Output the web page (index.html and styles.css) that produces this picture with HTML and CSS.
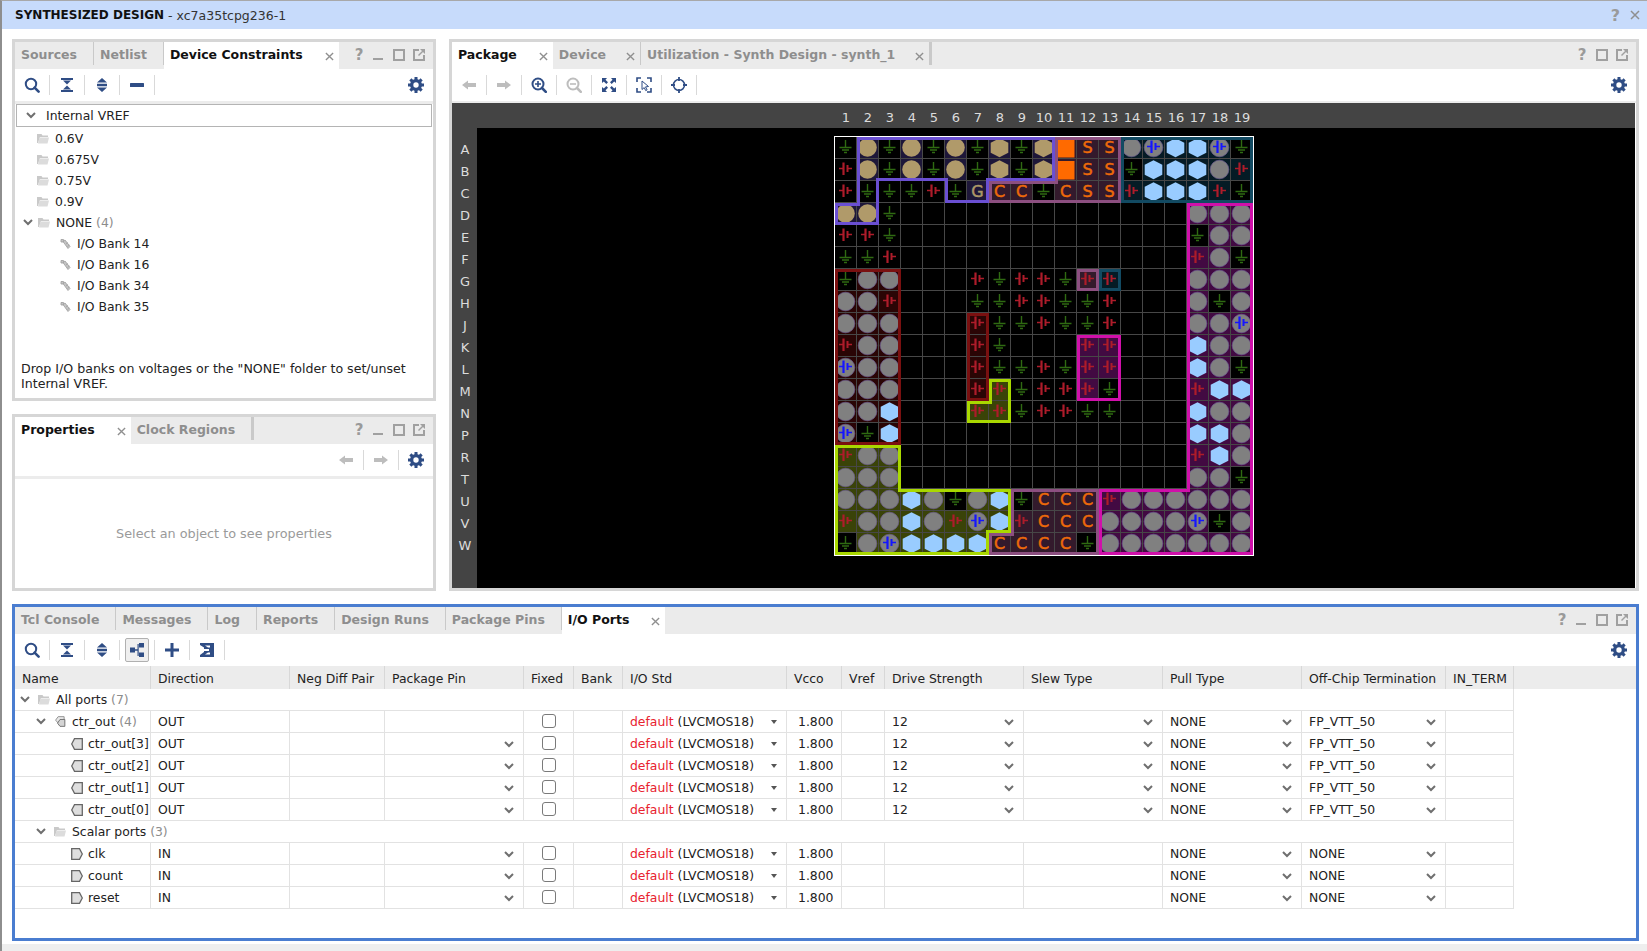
FILE: index.html
```html
<!DOCTYPE html>
<html lang="en">
<head>
<meta charset="utf-8">
<title>Synthesized Design</title>
<link rel="stylesheet" href="styles.css">
</head>
<body>
<svg class="sprites" width="0" height="0" aria-hidden="true">
  <symbol id="i-search" viewBox="0 0 16 16"><circle cx="7" cy="7" r="5.2" fill="none" stroke="currentColor" stroke-width="2"/><path d="M10.6 10.6l4 4" stroke="currentColor" stroke-width="2.6" stroke-linecap="round"/></symbol>
  <symbol id="i-collapse" viewBox="0 0 16 16"><path d="M2 1h12v2H2zM4 3.500h8l-4 4zM8 8.500l4 4H4zM2 13h12v2H2z" fill="currentColor"/></symbol>
  <symbol id="i-expand" viewBox="0 0 16 16"><path d="M8 1l5 4.500H3zM3 6.800h10v2.400H3zM3 10.500h10l-5 4.500z" fill="currentColor"/></symbol>
  <symbol id="i-minus" viewBox="0 0 16 16"><rect x="1" y="6" width="14" height="4" rx=".5" fill="currentColor"/></symbol>
  <symbol id="i-gear" viewBox="0 0 16 16"><g fill="currentColor"><path d="M6.500 0h3v16h-3zM0 6.500h16v3H0z"/><path d="M6.500 0h3v16h-3zM0 6.500h16v3H0z" transform="rotate(45 8 8)"/><circle cx="8" cy="8" r="6"/></g><circle cx="8" cy="8" r="2.700" fill="#fff"/></symbol>
  <symbol id="i-back" viewBox="0 0 16 16"><path d="M1 8l6-4.500V6h8v4H7v2.500z" fill="currentColor"/></symbol>
  <symbol id="i-fwd" viewBox="0 0 16 16"><path d="M15 8L9 3.500V6H1v4h8v2.500z" fill="currentColor"/></symbol>
  <symbol id="i-zoomin" viewBox="0 0 16 16"><circle cx="7" cy="7" r="5.500" fill="none" stroke="currentColor" stroke-width="2"/><path d="M4 7h6M7 4v6" stroke="currentColor" stroke-width="1.600"/><path d="M11 11l3.800 3.800" stroke="currentColor" stroke-width="2.600" stroke-linecap="round"/></symbol>
  <symbol id="i-zoomout" viewBox="0 0 16 16"><circle cx="7" cy="7" r="5.500" fill="none" stroke="currentColor" stroke-width="2"/><path d="M4 7h6" stroke="currentColor" stroke-width="1.600"/><path d="M11 11l3.800 3.800" stroke="currentColor" stroke-width="2.600" stroke-linecap="round"/></symbol>
  <symbol id="i-fit" viewBox="0 0 16 16"><g fill="currentColor"><path d="M1 1h5L4.500 2.800 7 5.300 5.300 7 2.800 4.500 1 6z"/><path d="M15 1v5l-1.800-1.500L10.700 7 9 5.300l2.500-2.500L10 1z"/><path d="M1 15v-5l1.800 1.500L5.300 9 7 10.700l-2.500 2.500L6 15z"/><path d="M15 15h-5l1.500-1.800L9 10.700 10.700 9l2.500 2.500L15 10z"/></g></symbol>
  <symbol id="i-select" viewBox="0 0 16 16"><path d="M1 5V1h4M11 1h4v4M15 11v4h-4M5 15H1v-4" fill="none" stroke="currentColor" stroke-width="1.600"/><path d="M6 4l6.500 5.500-3 .4 1.600 3-1.400.7-1.500-3-2.200 1.900z" fill="#fff" stroke="currentColor"/></symbol>
  <symbol id="i-cross" viewBox="0 0 16 16"><circle cx="8" cy="8" r="5.500" fill="none" stroke="currentColor" stroke-width="1.500"/><path d="M8 0v4M8 12v4M0 8h4M12 8h4" stroke="currentColor" stroke-width="1.800"/></symbol>
  <symbol id="i-group" viewBox="0 0 16 16"><path d="M1 5.500h5v5H1zM6 7.300h3v1.400H6zM8.500 2h1.200v12H8.500zM10 1h5v4.500h-5zM10 10.500h5V15h-5z" fill="currentColor"/></symbol>
  <symbol id="i-plus" viewBox="0 0 16 16"><path d="M6.500 1h3v5.500H15v3H9.500V15h-3V9.500H1v-3h5.500z" fill="currentColor"/></symbol>
  <symbol id="i-assign" viewBox="0 0 16 16"><path d="M1 1h14v14H1v-2l4-3V9h5V7H5V5.500L1 3zM6 3.500l3 2h2V3.500zM6 12.500h5v-2H9z" fill="currentColor" fill-rule="evenodd"/></symbol>
  <symbol id="i-min" viewBox="0 0 14 14"><rect x="1" y="10" width="10" height="2" fill="currentColor"/></symbol>
  <symbol id="i-max" viewBox="0 0 14 14"><rect x="2" y="2" width="10" height="10" fill="none" stroke="currentColor" stroke-width="2"/></symbol>
  <symbol id="i-pop" viewBox="0 0 14 14"><path d="M7 2H2v10h10V7" fill="none" stroke="currentColor" stroke-width="2"/><path d="M8 1h5v5z M6 7l4-4 1 1-4 4z" fill="currentColor"/></symbol>
  <symbol id="i-close" viewBox="0 0 10 10"><path d="M1 1l8 8M9 1l-8 8" stroke="currentColor" stroke-width="1.500"/></symbol>
  <symbol id="i-chev" viewBox="0 0 10 7"><path d="M1 1l4 4 4-4" fill="none" stroke="currentColor" stroke-width="2"/></symbol>
  <symbol id="i-folder" viewBox="0 0 12 11"><path d="M0 1h4.500l1 1.500H11V4H3L1 10H0z" fill="#c9c9c9"/><path d="M2.500 4.500H12L10.500 10.500H1z" fill="#dcdcdc"/></symbol>
  <symbol id="i-bank" viewBox="0 0 12 12"><path d="M2 1.500h2.500v2.500H2zM4 3.500l2-1.500 5 6.500-2 2zM7 6l2-1.500M8.500 8.500l2-1.500" fill="#c4c4c4" stroke="#a4a4a4" stroke-width=".9"/></symbol>
  <symbol id="i-out" viewBox="0 0 12 12"><path d="M3.500 .7h7.800v10.600H3.500L.7 6z" fill="#dedede" stroke="#666" stroke-width="1.300"/></symbol>
  <symbol id="i-in" viewBox="0 0 12 12"><path d="M.7 .7h7.800l2.800 5.300-2.800 5.300H.7z" fill="#dedede" stroke="#666" stroke-width="1.300"/></symbol>
  <symbol id="i-bus" viewBox="0 0 12 12"><path d="M4 .7h6.500v7H4L1.200 4.500z" fill="#e8e8e8" stroke="#8c8c8c"/><path d="M6 3.800h5.300v7.500H6L3.300 7.800z" fill="#d4d4d4" stroke="#6c6c6c"/></symbol>
</svg>

<div class="app">
  <header class="titlebar">
    <span class="title-main">SYNTHESIZED DESIGN</span><span class="title-sub">&nbsp;- xc7a35tcpg236-1</span>
    <div class="title-actions">
      <span class="help help-large">?</span>
      <svg class="title-close"><use href="#i-close"/></svg>
    </div>
  </header>

  <main class="workspace">
    <div class="upper">
      <div class="left-col">
        <section class="panel panel-sources">
          <div class="tabbar">
            <div class="tab">Sources</div>
            <div class="tab">Netlist</div>
            <div class="tab active"><span>Device Constraints</span><svg class="tab-close"><use href="#i-close"/></svg></div>
            <div class="win-icons">
              <span class="win-icon help">?</span>
              <svg class="win-icon"><use href="#i-min"/></svg>
              <svg class="win-icon"><use href="#i-max"/></svg>
              <svg class="win-icon"><use href="#i-pop"/></svg>
            </div>
          </div>
          <div class="toolbar">
            <div class="tool"><svg><use href="#i-search"/></svg></div><i class="sep"></i>
            <div class="tool"><svg><use href="#i-collapse"/></svg></div><i class="sep"></i>
            <div class="tool"><svg><use href="#i-expand"/></svg></div><i class="sep"></i>
            <div class="tool"><svg><use href="#i-minus"/></svg></div><i class="sep"></i>
            <div class="tool tool-end"><svg><use href="#i-gear"/></svg></div>
          </div>
          <div class="tree">
            <div class="tree-head"><svg class="chev"><use href="#i-chev"/></svg>Internal VREF</div>
            <div class="tree-row lvl1"><svg class="folder"><use href="#i-folder"/></svg>0.6V</div>
            <div class="tree-row lvl1"><svg class="folder"><use href="#i-folder"/></svg>0.675V</div>
            <div class="tree-row lvl1"><svg class="folder"><use href="#i-folder"/></svg>0.75V</div>
            <div class="tree-row lvl1"><svg class="folder"><use href="#i-folder"/></svg>0.9V</div>
            <div class="tree-row lvl0"><svg class="chev"><use href="#i-chev"/></svg><svg class="folder"><use href="#i-folder"/></svg>NONE&nbsp;<span class="count">(4)</span></div>
            <div class="tree-row lvl2"><svg class="bank"><use href="#i-bank"/></svg>I/O Bank 14</div>
            <div class="tree-row lvl2"><svg class="bank"><use href="#i-bank"/></svg>I/O Bank 16</div>
            <div class="tree-row lvl2"><svg class="bank"><use href="#i-bank"/></svg>I/O Bank 34</div>
            <div class="tree-row lvl2"><svg class="bank"><use href="#i-bank"/></svg>I/O Bank 35</div>
          </div>
          <p class="note">Drop I/O banks on voltages or the "NONE" folder to set/unset<br>Internal VREF.</p>
        </section>

        <section class="panel panel-props">
          <div class="tabbar">
            <div class="tab active"><span>Properties</span><svg class="tab-close"><use href="#i-close"/></svg></div>
            <div class="tab tab-heavy">Clock Regions</div>
            <div class="win-icons">
              <span class="win-icon help">?</span>
              <svg class="win-icon"><use href="#i-min"/></svg>
              <svg class="win-icon"><use href="#i-max"/></svg>
              <svg class="win-icon"><use href="#i-pop"/></svg>
            </div>
          </div>
          <div class="toolbar">
            <div class="tool disabled tool-push"><svg><use href="#i-back"/></svg></div><i class="sep"></i>
            <div class="tool disabled"><svg><use href="#i-fwd"/></svg></div><i class="sep"></i>
            <div class="tool"><svg><use href="#i-gear"/></svg></div>
          </div>
          <div class="empty">Select an object to see properties</div>
        </section>
      </div>

      <section class="panel panel-package">
        <div class="tabbar">
          <div class="tab active"><span>Package</span><svg class="tab-close"><use href="#i-close"/></svg></div>
          <div class="tab tab-closable"><span>Device</span><svg class="tab-close"><use href="#i-close"/></svg></div>
          <div class="tab tab-closable tab-heavy"><span>Utilization - Synth Design - synth_1</span><svg class="tab-close"><use href="#i-close"/></svg></div>
          <div class="win-icons">
            <span class="win-icon help">?</span>
            <svg class="win-icon"><use href="#i-max"/></svg>
            <svg class="win-icon"><use href="#i-pop"/></svg>
          </div>
        </div>
        <div class="toolbar toolbar-thin">
          <div class="tool disabled"><svg><use href="#i-back"/></svg></div><i class="sep"></i>
          <div class="tool disabled"><svg><use href="#i-fwd"/></svg></div><i class="sep"></i>
          <div class="tool"><svg><use href="#i-zoomin"/></svg></div><i class="sep"></i>
          <div class="tool disabled"><svg><use href="#i-zoomout"/></svg></div><i class="sep"></i>
          <div class="tool"><svg><use href="#i-fit"/></svg></div><i class="sep"></i>
          <div class="tool"><svg><use href="#i-select"/></svg></div><i class="sep"></i>
          <div class="tool"><svg><use href="#i-cross"/></svg></div><i class="sep"></i>
          <div class="tool tool-end"><svg><use href="#i-gear"/></svg></div>
        </div>
        <svg id="package" class="package" width="1183" height="485" viewBox="0 0 1183 485"></svg>
      </section>
    </div>

    <section class="panel panel-ports">
      <div class="tabbar">
        <div class="tab">Tcl Console</div>
        <div class="tab">Messages</div>
        <div class="tab">Log</div>
        <div class="tab">Reports</div>
        <div class="tab">Design Runs</div>
        <div class="tab">Package Pins</div>
        <div class="tab active"><span>I/O Ports</span><svg class="tab-close"><use href="#i-close"/></svg></div>
        <div class="win-icons">
          <span class="win-icon help">?</span>
          <svg class="win-icon"><use href="#i-min"/></svg>
          <svg class="win-icon"><use href="#i-max"/></svg>
          <svg class="win-icon"><use href="#i-pop"/></svg>
        </div>
      </div>
      <div class="toolbar toolbar-flush">
        <div class="tool"><svg><use href="#i-search"/></svg></div><i class="sep"></i>
        <div class="tool"><svg><use href="#i-collapse"/></svg></div><i class="sep"></i>
        <div class="tool"><svg><use href="#i-expand"/></svg></div><i class="sep"></i>
        <div class="tool"><span class="toggled"><svg><use href="#i-group"/></svg></span></div><i class="sep"></i>
        <div class="tool"><svg><use href="#i-plus"/></svg></div><i class="sep"></i>
        <div class="tool"><svg><use href="#i-assign"/></svg></div><i class="sep"></i>
        <div class="tool tool-end"><svg><use href="#i-gear"/></svg></div>
      </div>
      <div class="table-wrap">
        <table class="ports">
          <colgroup>
            <col class="c-name"><col class="c-dir"><col class="c-neg"><col class="c-pin"><col class="c-fixed"><col class="c-bank"><col class="c-std"><col class="c-vcco"><col class="c-vref"><col class="c-drive"><col class="c-slew"><col class="c-pull"><col class="c-off"><col class="c-term">
          </colgroup>
          <thead>
            <tr><th>Name</th><th>Direction</th><th>Neg Diff Pair</th><th>Package Pin</th><th>Fixed</th><th>Bank</th><th>I/O Std</th><th>Vcco</th><th>Vref</th><th>Drive Strength</th><th>Slew Type</th><th>Pull Type</th><th>Off-Chip Termination</th><th>IN_TERM</th></tr>
          </thead>
          <tbody>
            <tr><td colspan="14"><div class="name lvl-a"><svg class="chev"><use href="#i-chev"/></svg><svg class="folder"><use href="#i-folder"/></svg>All ports&nbsp;<span class="count">(7)</span></div></td></tr>
            <tr><td><div class="name lvl-b"><svg class="chev"><use href="#i-chev"/></svg><svg class="folder"><use href="#i-bus"/></svg>ctr_out&nbsp;<span class="count">(4)</span></div></td><td>OUT</td><td></td><td></td><td class="mid"><span class="cb"></span></td><td></td><td><div class="sel"><span><em>default</em> (LVCMOS18)</span><i class="tri"></i></div></td><td class="vcco">1.800</td><td></td><td><div class="sel"><span>12</span><svg class="chev"><use href="#i-chev"/></svg></div></td><td><div class="sel"><svg class="chev"><use href="#i-chev"/></svg></div></td><td><div class="sel"><span>NONE</span><svg class="chev"><use href="#i-chev"/></svg></div></td><td><div class="sel"><span>FP_VTT_50</span><svg class="chev"><use href="#i-chev"/></svg></div></td><td></td></tr>
            <tr><td><div class="name lvl-c"><svg class="port"><use href="#i-out"/></svg>ctr_out[3]</div></td><td>OUT</td><td></td><td><div class="sel"><svg class="chev"><use href="#i-chev"/></svg></div></td><td class="mid"><span class="cb"></span></td><td></td><td><div class="sel"><span><em>default</em> (LVCMOS18)</span><i class="tri"></i></div></td><td class="vcco">1.800</td><td></td><td><div class="sel"><span>12</span><svg class="chev"><use href="#i-chev"/></svg></div></td><td><div class="sel"><svg class="chev"><use href="#i-chev"/></svg></div></td><td><div class="sel"><span>NONE</span><svg class="chev"><use href="#i-chev"/></svg></div></td><td><div class="sel"><span>FP_VTT_50</span><svg class="chev"><use href="#i-chev"/></svg></div></td><td></td></tr>
            <tr><td><div class="name lvl-c"><svg class="port"><use href="#i-out"/></svg>ctr_out[2]</div></td><td>OUT</td><td></td><td><div class="sel"><svg class="chev"><use href="#i-chev"/></svg></div></td><td class="mid"><span class="cb"></span></td><td></td><td><div class="sel"><span><em>default</em> (LVCMOS18)</span><i class="tri"></i></div></td><td class="vcco">1.800</td><td></td><td><div class="sel"><span>12</span><svg class="chev"><use href="#i-chev"/></svg></div></td><td><div class="sel"><svg class="chev"><use href="#i-chev"/></svg></div></td><td><div class="sel"><span>NONE</span><svg class="chev"><use href="#i-chev"/></svg></div></td><td><div class="sel"><span>FP_VTT_50</span><svg class="chev"><use href="#i-chev"/></svg></div></td><td></td></tr>
            <tr><td><div class="name lvl-c"><svg class="port"><use href="#i-out"/></svg>ctr_out[1]</div></td><td>OUT</td><td></td><td><div class="sel"><svg class="chev"><use href="#i-chev"/></svg></div></td><td class="mid"><span class="cb"></span></td><td></td><td><div class="sel"><span><em>default</em> (LVCMOS18)</span><i class="tri"></i></div></td><td class="vcco">1.800</td><td></td><td><div class="sel"><span>12</span><svg class="chev"><use href="#i-chev"/></svg></div></td><td><div class="sel"><svg class="chev"><use href="#i-chev"/></svg></div></td><td><div class="sel"><span>NONE</span><svg class="chev"><use href="#i-chev"/></svg></div></td><td><div class="sel"><span>FP_VTT_50</span><svg class="chev"><use href="#i-chev"/></svg></div></td><td></td></tr>
            <tr><td><div class="name lvl-c"><svg class="port"><use href="#i-out"/></svg>ctr_out[0]</div></td><td>OUT</td><td></td><td><div class="sel"><svg class="chev"><use href="#i-chev"/></svg></div></td><td class="mid"><span class="cb"></span></td><td></td><td><div class="sel"><span><em>default</em> (LVCMOS18)</span><i class="tri"></i></div></td><td class="vcco">1.800</td><td></td><td><div class="sel"><span>12</span><svg class="chev"><use href="#i-chev"/></svg></div></td><td><div class="sel"><svg class="chev"><use href="#i-chev"/></svg></div></td><td><div class="sel"><span>NONE</span><svg class="chev"><use href="#i-chev"/></svg></div></td><td><div class="sel"><span>FP_VTT_50</span><svg class="chev"><use href="#i-chev"/></svg></div></td><td></td></tr>
            <tr><td colspan="14"><div class="name lvl-b"><svg class="chev"><use href="#i-chev"/></svg><svg class="folder"><use href="#i-folder"/></svg>Scalar ports&nbsp;<span class="count">(3)</span></div></td></tr>
            <tr><td><div class="name lvl-c"><svg class="port"><use href="#i-in"/></svg>clk</div></td><td>IN</td><td></td><td><div class="sel"><svg class="chev"><use href="#i-chev"/></svg></div></td><td class="mid"><span class="cb"></span></td><td></td><td><div class="sel"><span><em>default</em> (LVCMOS18)</span><i class="tri"></i></div></td><td class="vcco">1.800</td><td></td><td></td><td></td><td><div class="sel"><span>NONE</span><svg class="chev"><use href="#i-chev"/></svg></div></td><td><div class="sel"><span>NONE</span><svg class="chev"><use href="#i-chev"/></svg></div></td><td></td></tr>
            <tr><td><div class="name lvl-c"><svg class="port"><use href="#i-in"/></svg>count</div></td><td>IN</td><td></td><td><div class="sel"><svg class="chev"><use href="#i-chev"/></svg></div></td><td class="mid"><span class="cb"></span></td><td></td><td><div class="sel"><span><em>default</em> (LVCMOS18)</span><i class="tri"></i></div></td><td class="vcco">1.800</td><td></td><td></td><td></td><td><div class="sel"><span>NONE</span><svg class="chev"><use href="#i-chev"/></svg></div></td><td><div class="sel"><span>NONE</span><svg class="chev"><use href="#i-chev"/></svg></div></td><td></td></tr>
            <tr><td><div class="name lvl-c"><svg class="port"><use href="#i-in"/></svg>reset</div></td><td>IN</td><td></td><td><div class="sel"><svg class="chev"><use href="#i-chev"/></svg></div></td><td class="mid"><span class="cb"></span></td><td></td><td><div class="sel"><span><em>default</em> (LVCMOS18)</span><i class="tri"></i></div></td><td class="vcco">1.800</td><td></td><td></td><td></td><td><div class="sel"><span>NONE</span><svg class="chev"><use href="#i-chev"/></svg></div></td><td><div class="sel"><span>NONE</span><svg class="chev"><use href="#i-chev"/></svg></div></td><td></td></tr>
          </tbody>
        </table>
      </div>
    </section>
  </main>
  <footer class="statusbar"></footer>
</div>
<script src="package.js"></script>
</body>
</html>
```

FILE: styles.css
```css
* { box-sizing: border-box; }
html, body { margin: 0; height: 951px; overflow: hidden; background: #fff; }
body { font: 12.4px "DejaVu Sans", sans-serif; color: #222; }
.sprites { position: absolute; }

.app { height: 951px; display: flex; flex-direction: column; border-left: 2px solid #8e8e8e; border-top: 1px solid #a8a8a8; }

.titlebar { height: 28px; flex: none; display: flex; align-items: center; padding-left: 13px; background: #c7dbfb; font-size: 12.5px; }
.title-main { font-weight: 700; font-size: 12px; color: #111; }
.title-sub { color: #333; }
.title-actions { margin-left: auto; display: flex; align-items: center; gap: 10px; padding-right: 7px; color: #8f8f8f; }
.help { font-weight: 700; color: #9a9a9a; text-align: center; }
.help-large { font-size: 16px; }
.title-close { width: 10px; height: 10px; }

.workspace { flex: 1; display: flex; flex-direction: column; gap: 13px; padding: 10px 8px 3px 10px; min-height: 0; }
.upper { height: 552px; display: flex; gap: 13px; }
.left-col { width: 424px; display: flex; flex-direction: column; gap: 13px; }
.statusbar { height: 7px; flex: none; background: #eeeeee; }

.panel { border: 3px solid #d6d6d6; display: flex; flex-direction: column; background: #fff; min-width: 0; }
.panel-sources { height: 362px; }
.panel-props { height: 177px; }
.panel-package { width: 1190px; }
.panel-ports { height: 337px; border-color: #4a7dd0; }

.tabbar { height: 27px; flex: none; display: flex; align-items: flex-start; background: #ebebeb; }
.tab { height: 23px; line-height: 25px; padding: 0 16px 0 6px; border-right: 1px solid #c9c9c9; font-size: 12.5px; font-weight: 700; color: #8e8e8e; white-space: nowrap; display: flex; align-items: flex-start; }
.tab.active { height: 27px; background: #fff; color: #111; border-right: 0; padding: 0 5px 0 6px; }
.tab-closable { padding: 0 5px 0 6px; }
.tab-heavy { border-right: 3px solid #c9c9c9; }
.tab-close { width: 9px; height: 9px; margin: 10px 0 0 22px; color: #8f8f8f; flex: none; }
.tab-closable .tab-close { margin-left: 20px; }
.win-icons { margin-left: auto; padding: 3px 4px 0 0; display: flex; color: #a0a0a0; }
.win-icon { width: 20px; height: 20px; font-size: 15px; line-height: 20px; padding: 3px; }
span.win-icon { padding: 0; }

.toolbar { height: 35px; flex: none; display: flex; align-items: flex-start; padding-top: 6px; border-bottom: 3px solid #ececec; color: #2f4d85; }
.toolbar-thin { height: 34px; border-bottom-width: 2px; }
.toolbar-flush { height: 32px; border-bottom: 0; }
.tool { width: 34px; height: 20px; display: flex; align-items: center; justify-content: center; flex: none; }
.tool svg { width: 16px; height: 16px; display: block; }
.tool.disabled { color: #bdbdbd; }
.tool-end { margin-left: auto; }
.tool-push { margin-left: auto; }
.toggled { width: 24px; height: 24px; flex: none; display: flex; align-items: center; justify-content: center; background: #efefef; border: 1px solid #b0b0b0; border-radius: 2px; }
.sep { width: 1px; height: 20px; flex: none; background: #d9d9d9; }

.tree { flex: 1; }
.tree-head { height: 23px; margin: 0 1px 1px; border: 1px solid #b4b4b4; display: flex; align-items: center; padding-left: 9px; }
.tree-head .chev { margin-right: 10px; }
.tree-row { height: 21px; display: flex; align-items: center; }
.lvl0 { padding-left: 8px; }
.lvl0 .chev { margin-right: 5px; }
.lvl1 { padding-left: 22px; }
.lvl2 { padding-left: 44px; }
.chev { width: 10px; height: 7px; flex: none; color: #6f6f6f; }
.folder { width: 12px; height: 11px; margin-right: 6px; flex: none; }
.bank { width: 12px; height: 12px; margin-right: 6px; flex: none; }
.count { color: #8c8c8c; }
.note { margin: 0 0 7px; padding-left: 6px; line-height: 15px; font-size: 12.6px; color: #222; }

.empty { flex: 1; display: flex; align-items: center; justify-content: center; font-size: 12.8px; color: #9a9a9a; }

.package { display: block; background: #000; }
.package text { font-family: "DejaVu Sans", sans-serif; }
.pk-label { font-size: 13px; fill: #dcdcdc; text-anchor: middle; }
.pk-letter { font-size: 16px; stroke-width: .5px; text-anchor: middle; }

.table-wrap { flex: 1; background: linear-gradient(#ececec 23px, #fff 23px); }
.ports { table-layout: fixed; width: 1499px; border-collapse: separate; border-spacing: 0; }
.c-name { width: 136px; } .c-dir { width: 139px; } .c-neg { width: 95px; } .c-pin { width: 139px; }
.c-fixed { width: 50px; } .c-bank { width: 49px; } .c-std { width: 164px; } .c-vcco { width: 55px; }
.c-vref { width: 43px; } .c-drive { width: 139px; } .c-slew { width: 139px; } .c-pull { width: 139px; }
.c-off { width: 144px; } .c-term { width: 68px; }
.ports th { height: 23px; padding: 2px 0 0 7px; text-align: left; font-weight: 400; color: #222; border-right: 1px solid #d8d8d8; white-space: nowrap; overflow: hidden; }
.ports td { height: 22px; padding: 0 0 0 7px; border-right: 1px solid #e2e2e2; border-bottom: 1px solid #e2e2e2; white-space: nowrap; }
.ports td:has(.name), .ports td:has(.sel) { padding: 0; }
.mid { text-align: center; padding: 0 !important; }
.vcco { padding-left: 11px !important; }
.name { display: flex; align-items: center; height: 21px; }
.lvl-a { padding-left: 5px; }
.lvl-a .chev { margin-right: 8px; }
.lvl-b { padding-left: 21px; }
.lvl-b .chev { margin-right: 8px; }
.lvl-c { padding-left: 56px; }
.port { width: 12px; height: 12px; margin-right: 5px; flex: none; }
.sel { display: flex; align-items: center; justify-content: space-between; height: 21px; padding: 0 9px 0 7px; }
.sel .chev { margin: 2px 0 0 auto; }
.sel em { font-style: normal; color: #e8222e; }
.tri { width: 0; height: 0; border: 3.500px solid transparent; border-top: 4px solid #555; border-bottom: 0; }
.cb { display: block; width: 14px; height: 14px; margin: -1px auto 0; border: 1.500px solid #7a7a7a; border-radius: 3px; background: #fff; }
```

FILE: package.js
```js
// Package view: a free canvas of pins, drawn from a map of the device.
(function () {
  var CELL = 22, ORIGIN_X = 383, ORIGIN_Y = 34;
  var rowNames = "ABCDEFGHJKLMNPRTUVW".split("");
  var pins = [
    "gtgtgtgTgTqSSobhhbg",
    "rtgtgtgTgTqSSghhhor",
    "rgggrgGCCgCSSrhhhrg",
    "ttg.............ooo",
    "rrg.............goo",
    "ggr.............rog",
    "goo...rgrrgrr...ooo",
    "oor...ggrrggr...ogo",
    "ooo...rggrggr...oob",
    "roo...rg...rr...hoo",
    "boo...rggrgrr...hog",
    "ooo...rrgrrrg...rhh",
    "ooh...rrgrrgg...hoo",
    "bgh.............hho",
    "roo.............rho",
    "ooo.............oog",
    "ooohogohgCCCroooooo",
    "roohorbhrCCCoooobgo",
    "gobhhhhCCCCgooooooo"
  ];
  var regions = [
    { line: "#6a4fd2", tint: "#1e1739", pts: [[1,0],[10,0],[10,2],[7,2],[7,3],[5,3],[5,2],[2,2],[2,4],[0,4],[0,3],[1,3]] },
    { line: "#8c4f80", tint: "#331a2c", pts: [[10,0],[13,0],[13,3],[7,3],[7,2],[10,2]] },
    { line: "#124a62", tint: "#051b25", pts: [[13,0],[19,0],[19,3],[13,3]] },
    { line: "#d010aa", tint: "#420a42", pts: [[16,3],[19,3],[19,19],[12,19],[12,16],[16,16]] },
    { line: "#7a1010", tint: "#2a0505", pts: [[0,6],[3,6],[3,14],[0,14]] },
    { line: "#7a1010", tint: "#2a0505", pts: [[6,8],[7,8],[7,12],[6,12]] },
    { line: "#a9d800", tint: "#3a4308", pts: [[0,14],[3,14],[3,16],[8,16],[8,18],[7,18],[7,19],[0,19]] },
    { line: "#a9d800", tint: "#3a4308", pts: [[7,11],[8,11],[8,13],[6,13],[6,12],[7,12]] },
    { line: "#8c4f80", tint: "#331a2c", pts: [[8,16],[12,16],[12,19],[7,19],[7,18],[8,18]] },
    { line: "#8c4f80", tint: "#331a2c", pts: [[11,6],[12,6],[12,7],[11,7]] },
    { line: "#124a62", tint: "#051b25", pts: [[12,6],[13,6],[13,7],[12,7]] },
    { line: "#d010aa", tint: "#420a42", pts: [[11,9],[13,9],[13,12],[11,12]] }
  ];

  function inside(x, y, pts) {
    var hit = false;
    for (var i = 0, j = pts.length - 1; i < pts.length; j = i++) {
      var a = pts[i], b = pts[j];
      if ((a[1] > y) !== (b[1] > y) && x < (b[0] - a[0]) * (y - a[1]) / (b[1] - a[1]) + a[0]) hit = !hit;
    }
    return hit;
  }
  function tintFor(c, r) {
    for (var i = 0; i < regions.length; i++) {
      if (inside(c + 0.5, r + 0.5, regions[i].pts)) return regions[i].tint;
    }
    return null;
  }
  function ground() {
    return '<path d="M10.500 3V10M4.500 10.500h12M7 13h7M9 15.500h3" stroke="#2f6a12" stroke-width="1.400" fill="none"/>';
  }
  function cap(color) {
    return '<path d="M4 9.500H8M13 9.500H17" stroke="' + color + '" stroke-width="1.500" fill="none"/>' +
           '<path d="M8.500 3.500V16" stroke="' + color + '" stroke-width="2.200" fill="none"/>' +
           '<path d="M12.500 6V13" stroke="' + color + '" stroke-width="2" fill="none"/>';
  }
  var HEX = "10.500,1.200 19.300,5.700 19.300,15.700 10.500,20.200 1.700,15.700 1.700,5.700";
  var EDGE = ' stroke="#6e5f92" stroke-width=".7"';
  function glyph(k) {
    switch (k) {
      case "g": return ground();
      case "r": return cap("#ad1c2a");
      case "o": return '<circle cx="10.500" cy="10.500" r="9.300" fill="#808080"' + EDGE + '/>';
      case "b": return '<circle cx="10.500" cy="10.500" r="9.300" fill="#808080"' + EDGE + '/>' + cap("#1414ff");
      case "t": return '<circle cx="10.500" cy="10.500" r="9.300" fill="#b09a6a"/>';
      case "T": return '<polygon points="' + HEX + '" fill="#b09a6a"/>';
      case "h": return '<polygon points="' + HEX + '" fill="#99ccff"/>';
      case "q": return '<rect x="1.500" y="2" width="18" height="18.500" fill="#ff6a00"/>';
      case "S": case "C": return '<text class="pk-letter" x="10.500" y="16" fill="#ee6a0a" stroke="#ee6a0a">' + k + '</text>';
      case "G": return '<text class="pk-letter" x="10.500" y="16" fill="#ac9868" stroke="#ac9868">G</text>';
    }
    return "";
  }

  var out = [];
  out.push('<rect width="1183" height="25" fill="#444"/><rect width="25" height="485" fill="#444"/>');
  var n;
  for (n = 0; n < 19; n++) {
    out.push('<text class="pk-label" x="' + (ORIGIN_X + n * CELL + 11) + '" y="19">' + (n + 1) + '</text>');
    out.push('<text class="pk-label" x="13" y="' + (ORIGIN_Y + n * CELL + 17) + '">' + rowNames[n] + '</text>');
  }
  out.push('<g transform="translate(' + ORIGIN_X + ' ' + ORIGIN_Y + ')">');
  out.push('<rect x="-.500" y="-.500" width="419" height="419" fill="#000" stroke="#fff"/>');
  var r, c;
  for (r = 0; r < 19; r++) {
    for (c = 0; c < 19; c++) {
      var tint = tintFor(c, r);
      if (tint && pins[r][c] !== "g") {
        out.push('<rect x="' + c * CELL + '" y="' + r * CELL + '" width="22" height="22" fill="' + tint + '"/>');
      }
    }
  }
  for (n = 1; n < 19; n++) {
    out.push('<path d="M' + (n * CELL - 0.5) + ' 0V418M0 ' + (n * CELL - 0.5) + 'H418" stroke="#474747"/>');
  }
  for (r = 0; r < 19; r++) {
    for (c = 0; c < 19; c++) {
      var g = glyph(pins[r][c]);
      if (g) out.push('<g transform="translate(' + c * CELL + ' ' + r * CELL + ')">' + g + '</g>');
    }
  }
  regions.forEach(function (reg, i) {
    var d = "M" + reg.pts.map(function (p) { return p[0] * CELL + " " + p[1] * CELL; }).join("L") + "Z";
    out.push('<clipPath id="rg' + i + '"><path d="' + d + '"/></clipPath>');
    out.push('<path d="' + d + '" fill="none" stroke="' + reg.line + '" stroke-width="6" clip-path="url(#rg' + i + ')"/>');
  });
  out.push('</g>');
  document.getElementById("package").innerHTML = out.join("");
})();
```
